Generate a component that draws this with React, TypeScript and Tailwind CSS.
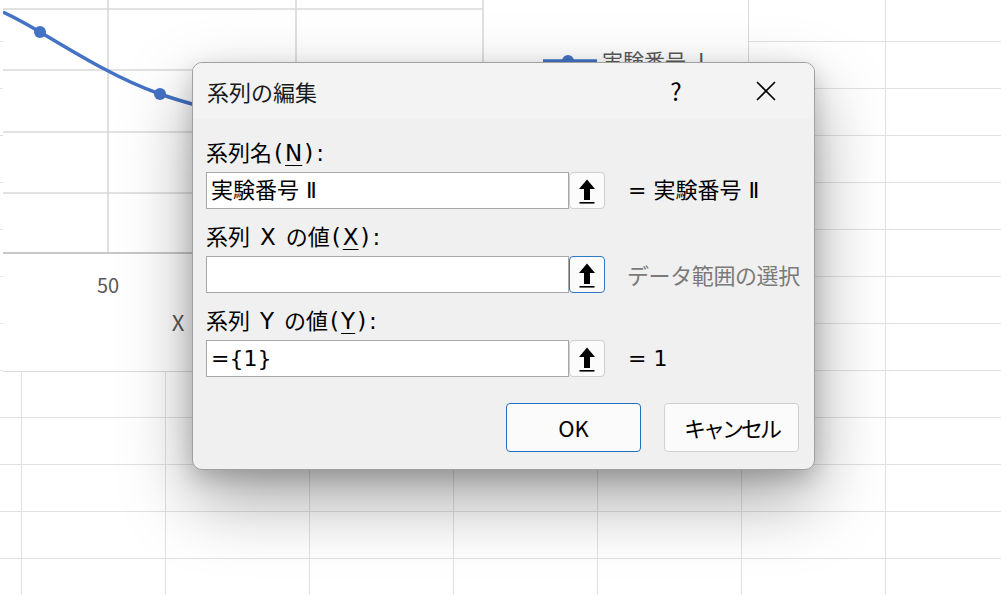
import React from 'react';

const font = { fontFamily: '"Noto Sans CJK JP", "Noto Sans", sans-serif' };
const inputFont = { fontFamily: '"DejaVu Sans", "Noto Sans CJK JP", sans-serif' };

function RefArrow() {
  return (
    <svg width="20" height="28" viewBox="0 0 20 28" className="shrink-0">
      <path d="M10 2.5 L18 12 L13 12 L13 23 L7 23 L7 12 L2 12 Z" fill="#000" />
      <rect x="2.5" y="25" width="15" height="1.6" fill="#000" />
    </svg>
  );
}

function RefInput({ value, focused, tail, muted }: { value?: string; focused?: boolean; tail: string; muted?: boolean }) {
  return (
    <div className="flex items-center h-[37px]">
      <div
        className="w-[363px] h-[37px] bg-white border border-[#a8a8a8] flex items-center pl-[4px] text-[22px] text-black leading-none"
        style={inputFont}
      >
        {value}
      </div>
      <div
        className={
          focused
            ? 'w-[36px] h-[37px] bg-[#fbfbfb] border border-[#2f78c8] rounded-[4px] flex items-center justify-center'
            : 'w-[36px] h-[37px] bg-[#fbfbfb] border border-[#cfcfcf] rounded-[4px] flex items-center justify-center'
        }
      >
        <RefArrow />
      </div>
      {muted ? (
        <div className="ml-[22px] text-[22px] text-[#7a7a7a] tracking-[-0.4px]">{tail}</div>
      ) : (
        <div className="ml-[23px] text-[22px] text-black" style={inputFont}>
          {tail}
        </div>
      )}
    </div>
  );
}

function Sheet() {
  const cols = [22, 144, 144, 144, 144, 144, 144, 144];
  const rows = [42, 47, 47, 47, 47, 47, 47, 47, 47, 47, 47, 47, 47];
  return (
    <div className="flex flex-col">
      {rows.map((h, r) => (
        <div key={r} className="flex" style={{ height: h }}>
          {cols.map((w, c) => (
            <div key={c} className="shrink-0 border-r border-b border-[#e1e1e1]" style={{ width: w }} />
          ))}
        </div>
      ))}
    </div>
  );
}

function Chart() {
  const grid = '#d9d9d9';
  return (
    <div className="absolute left-[3px] top-0 w-[746px] h-[372px] bg-white border-r border-b border-[#d9d9d9]">
      <svg width="746" height="372" viewBox="3 0 746 372" style={font}>
        {[9, 70, 132, 193].map((y) => (
          <line key={y} x1="3" x2="483" y1={y} y2={y} stroke={grid} strokeWidth="1.6" />
        ))}
        {[108, 296, 483].map((x) => (
          <line key={x} x1={x} x2={x} y1="0" y2="253" stroke={grid} strokeWidth="1.6" />
        ))}
        <line x1="3" x2="483" y1="253" y2="253" stroke="#c8c8c8" strokeWidth="2" />
        <text x="108" y="293" fontSize="20" fill="#595959" textAnchor="middle">50</text>
        <text x="178" y="331" fontSize="22" fill="#595959" textAnchor="middle">X</text>
        <path
          d="M3 12 C18 19 30 26 40 32 C80 56 120 80 160 94 C180 101 200 107 240 116"
          fill="none"
          stroke="#4472c4"
          strokeWidth="3.5"
        />
        <circle cx="40" cy="32" r="6" fill="#4472c4" />
        <circle cx="160" cy="94" r="6" fill="#4472c4" />
        <line x1="543" x2="597" y1="61" y2="61" stroke="#4472c4" strokeWidth="3.5" />
        <circle cx="568" cy="61" r="6" fill="#4472c4" />
        <text x="602" y="69" fontSize="21" fill="#595959">実験番号 Ⅰ</text>
      </svg>
    </div>
  );
}

function Label({ axis, name, key1, first }: { axis?: string; name: string; key1: string; first?: boolean }) {
  return (
    <div
      className={
        first
          ? 'h-[30px] leading-[30px] text-[22px] text-black mb-[6px] flex items-baseline'
          : 'mt-[11px] h-[30px] leading-[30px] text-[22px] text-black mb-[6px] flex items-baseline'
      }
    >
      <span>系列</span>
      {axis && (
        <span className="mx-[10px] text-[23px]" style={inputFont}>
          {axis}
        </span>
      )}
      <span>{name}</span>
      <span style={inputFont} className="ml-[2px] mr-[2px] text-[23px]">(</span>
      <span style={inputFont} className="underline underline-offset-[4px] decoration-1 text-[23px]">
        {key1}
      </span>
      <span style={inputFont} className="ml-[2px] tracking-[3px] text-[23px]">):</span>
    </div>
  );
}

export default function App() {
  return (
    <div className="relative w-[1001px] h-[595px] overflow-hidden bg-white" style={font}>
      <Sheet />
      <Chart />

      {/* dialog */}
      <div className="absolute left-[192px] top-[62px] w-[623px] h-[408px] rounded-[10px] border border-[#a0a0a0] bg-[#f0f0f0] shadow-[0_30px_70px_rgba(0,0,0,0.35),0_8px_22px_rgba(0,0,0,0.18)] overflow-hidden flex flex-col">
        <div className="h-[56px] bg-[#f3f3f3] flex items-center pl-[14px] shrink-0">
          <div className="text-[22px] text-[#1a1a1a] leading-none">系列の編集</div>
          <div className="ml-auto w-[40px] text-center text-[24px] text-black leading-none mr-[50px]">?</div>
          <div className="w-[40px] flex items-center justify-center mr-[28px]">
            <svg width="20" height="20" viewBox="0 0 20 20">
              <path d="M1 1 L19 19 M19 1 L1 19" stroke="#000" strokeWidth="1.6" />
            </svg>
          </div>
        </div>

        <div className="flex flex-col pl-[13px] pt-[17px]">
          <Label first name="名" key1="N" />
          <RefInput value="実験番号 Ⅱ" tail="= 実験番号 Ⅱ" />

          <Label axis="X" name="の値" key1="X" />
          <RefInput focused tail="データ範囲の選択" muted />

          <Label axis="Y" name="の値" key1="Y" />
          <RefInput value="={1}" tail="= 1" />

          <div className="mt-[26px] flex justify-end gap-[23px] pr-[15px]">
            <button className="w-[135px] h-[49px] rounded-[4px] border border-[#1f6fc5] bg-[#fbfbfb] text-[22px] text-black">
              OK
            </button>
            <button className="w-[135px] h-[49px] rounded-[4px] border border-[#d0d0d0] bg-[#fbfbfb] text-[22px] text-black tracking-[-3px]">
              キャンセル
            </button>
          </div>
        </div>
      </div>
    </div>
  );
}
